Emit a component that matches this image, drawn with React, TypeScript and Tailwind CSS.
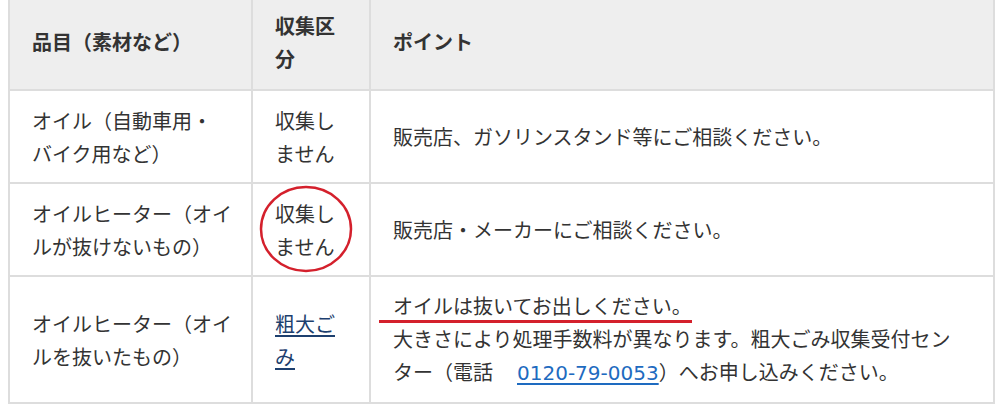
export default function App() {
  return (
    <div className="min-h-screen bg-white pl-2 font-['Noto_Sans_CJK_JP','Noto_Sans',sans-serif] text-[20px] leading-[33px] text-[#333]">
      <table className="w-[987px] table-fixed border-collapse">
        <colgroup>
          <col className="w-[243px]" />
          <col className="w-[118px]" />
          <col />
        </colgroup>
        <thead>
          <tr className="h-[90px] bg-[#eee]">
            <th className="border-x-2 border-b-2 border-[#ddd] px-[22px] pt-[8px] pb-[14px] text-left align-middle font-bold">
              品目（素材など）
            </th>
            <th className="border-x-2 border-b-2 border-[#ddd] px-[22px] pt-[8px] pb-[14px] text-left align-middle font-bold">
              収集区
              <br />分
            </th>
            <th className="border-x-2 border-b-2 border-[#ddd] px-[22px] pt-[8px] pb-[14px] text-left align-middle font-bold">
              ポイント
            </th>
          </tr>
        </thead>
        <tbody>
          {/* オイル */}
          <tr className="h-[93px]">
            <td className="whitespace-nowrap border-2 border-[#ddd] px-[22px] py-3 align-middle">
              オイル（自動車用・
              <br />
              バイク用など）
            </td>
            <td className="whitespace-nowrap border-2 border-[#ddd] px-[22px] py-3 align-middle">
              収集し
              <br />
              ません
            </td>
            <td className="border-2 border-[#ddd] px-[22px] py-3 align-middle">
              販売店、ガソリンスタンド等にご相談ください。
            </td>
          </tr>

          {/* オイルヒーター（抜けない） */}
          <tr className="h-[93px]">
            <td className="whitespace-nowrap border-2 border-[#ddd] px-[22px] py-3 align-middle">
              オイルヒーター（オイ
              <br />
              ルが抜けないもの）
            </td>
            <td className="whitespace-nowrap border-2 border-[#ddd] px-[22px] py-3 align-middle">
              <span className="relative inline-block">
                収集し
                <br />
                ません
                <svg
                  className="pointer-events-none absolute left-[-16px] top-[-12px]"
                  width="94"
                  height="88"
                  viewBox="0 0 94 88"
                  fill="none"
                >
                  <ellipse cx="47" cy="44" rx="45" ry="42" stroke="#d4202c" strokeWidth="2.5" />
                </svg>
              </span>
            </td>
            <td className="border-2 border-[#ddd] px-[22px] py-3 align-middle">
              販売店・メーカーにご相談ください。
            </td>
          </tr>

          {/* オイルヒーター（抜いた） */}
          <tr className="h-[123px]">
            <td className="whitespace-nowrap border-2 border-[#ddd] px-[22px] py-3 align-middle">
              オイルヒーター（オイ
              <br />
              ルを抜いたもの）
            </td>
            <td className="whitespace-nowrap border-2 border-[#ddd] px-[22px] py-3 align-middle">
              <a href="#" className="text-[#1d3f6e] underline underline-offset-[3px]">
                粗大ご
                <br />み
              </a>
            </td>
            <td className="border-2 border-[#ddd] px-[22px] py-3 align-middle">
              <span className="relative inline-block">
                オイルは抜いてお出しください。
                <span className="absolute bottom-[-1px] left-[-14px] right-0 h-[3px] bg-[#d4202c]" />
              </span>
              <br />
              大きさにより処理手数料が異なります。粗大ごみ収集受付セン
              <br />
              ター（電話{"\u3000"}
              <a
                href="#"
                className="ml-1 font-['DejaVu_Sans',sans-serif] text-[#1e6bc0] underline underline-offset-[3px]"
              >
                0120-79-0053
              </a>
              ）へお申し込みください。
            </td>
          </tr>
        </tbody>
      </table>
    </div>
  );
}
